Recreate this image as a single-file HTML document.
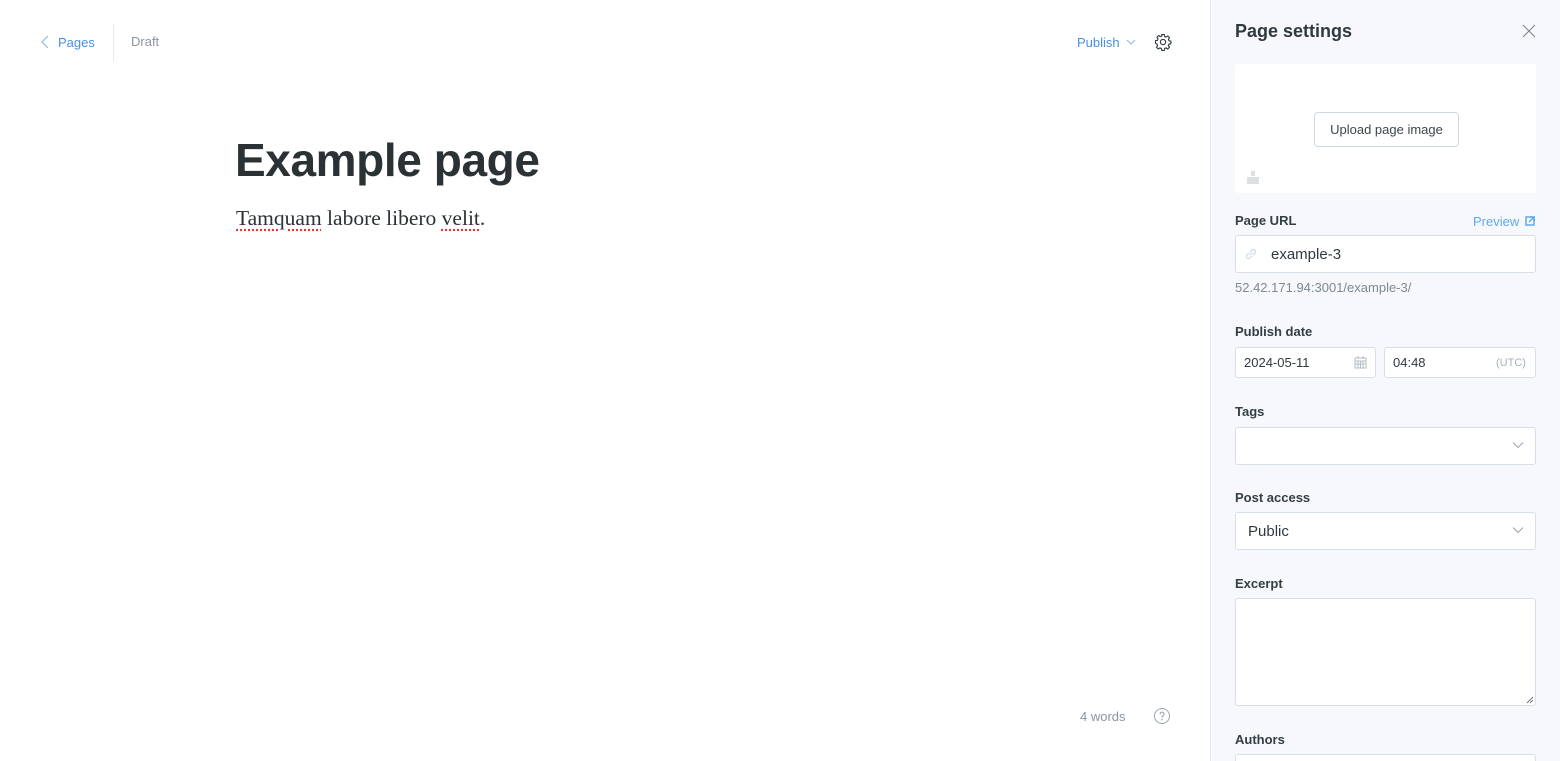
<!DOCTYPE html>
<html style="overflow:hidden"><head><meta charset="utf-8"><style>
*{box-sizing:border-box;margin:0;padding:0}
body{width:1560px;height:761px;overflow:hidden;background:#fff;font-family:"Liberation Sans",sans-serif;position:relative;color:#15212a}
.a{position:absolute}
.side{position:absolute;left:1210px;top:0;width:350px;height:761px;background:#f6f8fc;border-left:1px solid #e3ebf4;overflow:hidden}
.lbl{position:absolute;left:24px;font-size:13px;font-weight:bold;color:#343f44}
.inp{position:absolute;left:24px;width:301px;background:#fff;border:1px solid #d7e0ea;border-radius:3px}
</style></head><body>
<svg class="a" style="left:40px;top:35px" width="12" height="14" viewBox="0 0 12 14"><path d="M8 1L2 7l6 6" fill="none" stroke="#8fb8e8" stroke-width="1.2"/></svg>
<div class="a" style="left:58px;top:35px;font-size:13px;color:#4a90e2">Pages</div>
<div class="a" style="left:113px;top:24px;width:1px;height:37px;background:#e3ebf4"></div>
<div class="a" style="left:131px;top:34px;font-size:13px;color:#8a96a3">Draft</div>
<div class="a" style="left:1077px;top:35px;font-size:13px;color:#4a90e2">Publish</div>
<svg class="a" style="left:1126px;top:38px" width="10" height="8" viewBox="0 0 10 8"><path d="M1 2l4 4 4-4" fill="none" stroke="#8fb8e8" stroke-width="1"/></svg>
<svg class="a" style="left:1154px;top:33px" width="18" height="18" viewBox="0 0 24 24"><path d="M10.3 2h3.4l.5 2.6 1.9.8 2.2-1.5 2.4 2.4-1.5 2.2.8 1.9 2.6.5v3.4l-2.6.5-.8 1.9 1.5 2.2-2.4 2.4-2.2-1.5-1.9.8-.5 2.6h-3.4l-.5-2.6-1.9-.8-2.2 1.5-2.4-2.4 1.5-2.2-.8-1.9L2 13.7v-3.4l2.6-.5.8-1.9-1.5-2.2 2.4-2.4 2.2 1.5 1.9-.8z" fill="none" stroke="#2f3a40" stroke-width="1.5" stroke-linejoin="round"/><circle cx="12" cy="12" r="3.5" fill="none" stroke="#2f3a40" stroke-width="1.5"/></svg>
<div class="a" style="left:235px;top:133px;font-size:46px;font-weight:bold;color:#2a3236;letter-spacing:-0.4px">Example page</div>
<div class="a" style="left:236px;top:206px;font-size:21.5px;font-family:'Liberation Serif',serif;color:#2a3236"><span style="text-decoration:underline dotted #e33;text-underline-offset:4px">Tamquam</span> labore libero <span style="text-decoration:underline dotted #e33;text-underline-offset:4px">velit</span>.</div>
<div class="a" style="left:1080px;top:709px;font-size:13px;color:#8a96a3">4 words</div>
<svg class="a" style="left:1153px;top:707px" width="18" height="18" viewBox="0 0 18 18"><circle cx="9" cy="9" r="7.5" fill="none" stroke="#99a4ae" stroke-width="1"/><path d="M7 7.2a2 2 0 1 1 2.6 1.9c-.5.2-.6.5-.6 1v.6" fill="none" stroke="#99a4ae" stroke-width="1"/><circle cx="9" cy="12.6" r=".7" fill="#99a4ae"/></svg>
<div class="side">
<div class="a" style="left:24px;top:21px;font-size:18px;font-weight:bold;color:#2f3a40">Page settings</div>
<svg class="a" style="left:311px;top:24px" width="14" height="14" viewBox="0 0 14 14"><path d="M1 1l12 12M13 1L1 13" stroke="#7a858e" stroke-width="1"/></svg>
<div class="a" style="left:24px;top:64px;width:301px;height:129px;background:#fff;border-radius:3px"></div>
<div class="a" style="left:103px;top:112px;width:145px;height:35px;background:#fff;border:1px solid #cdd8e3;border-radius:4px;font-size:13px;color:#3b464c;text-align:center;line-height:33px">Upload page image</div>
<div class="a" style="left:36px;top:177px;width:12px;height:7px;background:#dde0e3"></div><div class="a" style="left:40px;top:171px;width:4px;height:5px;background:#dde0e3"></div>
<div class="lbl" style="top:213px">Page URL</div>
<div class="a" style="left:262px;top:214px;font-size:13px;color:#62a8ee">Preview</div>
<svg class="a" style="left:314px;top:216px" width="10" height="10" viewBox="0 0 10 10"><rect x="1" y="1" width="8" height="8" fill="none" stroke="#62a8ee" stroke-width="1.5"/><path d="M4 6l4-4M5 1h4v4" stroke="#62a8ee" stroke-width="1.5" fill="none"/></svg>
<div class="inp" style="top:235px;height:38px"></div>
<svg class="a" style="left:33px;top:247px" width="14" height="14" viewBox="0 0 14 14"><path d="M6 8l2-2M5 6L3 8a2 2 0 0 0 3 3l2-2M9 8l2-2a2 2 0 0 0-3-3L6 5" fill="none" stroke="#cfd9e3" stroke-width="1.2"/></svg>
<div class="a" style="left:60px;top:246px;font-size:15px;color:#2f3a40">example-3</div>
<div class="a" style="left:24px;top:280px;font-size:13px;color:#7d8891">52.42.171.94:3001/example-3/</div>
<div class="lbl" style="top:324px">Publish date</div>
<div class="inp" style="top:347px;height:31px;width:141px"></div>
<div class="a" style="left:33px;top:355px;font-size:13px;color:#2f3a40">2024-05-11</div>
<svg class="a" style="left:143px;top:356px" width="13" height="13" viewBox="0 0 13 13"><rect x="1" y="2" width="11" height="10" fill="none" stroke="#b4bcc4"/><path d="M1 5h11M4 5v7M6.5 5v7M9 5v7M1 8h11M4 0v3M9 0v3" stroke="#b4bcc4"/></svg>
<div class="inp" style="top:347px;height:31px;left:173px;width:152px"></div>
<div class="a" style="left:182px;top:355px;font-size:13px;color:#2f3a40">04:48</div>
<div class="a" style="left:285px;top:357px;font-size:11px;color:#a6b0b8">(UTC)</div>
<div class="lbl" style="top:404px">Tags</div>
<div class="inp" style="top:427px;height:38px"></div>
<svg class="a" style="left:301px;top:441px" width="12" height="8" viewBox="0 0 12 8"><path d="M1 1.5l5 5 5-5" fill="none" stroke="#98a3ad" stroke-width="1"/></svg>
<div class="lbl" style="top:490px">Post access</div>
<div class="inp" style="top:512px;height:38px"></div>
<div class="a" style="left:37px;top:523px;font-size:15px;color:#2f3a40">Public</div>
<svg class="a" style="left:301px;top:526px" width="12" height="8" viewBox="0 0 12 8"><path d="M1 1.5l5 5 5-5" fill="none" stroke="#98a3ad" stroke-width="1"/></svg>
<div class="lbl" style="top:576px">Excerpt</div>
<div class="inp" style="top:598px;height:108px"></div>
<svg class="a" style="left:315px;top:696px" width="8" height="8" viewBox="0 0 8 8"><path d="M1 7l6-6M4 7l3-3" stroke="#777" stroke-width="1"/></svg>
<div class="lbl" style="top:732px">Authors</div>
<div class="inp" style="top:754px;height:30px"></div>
</div>
</body></html>
